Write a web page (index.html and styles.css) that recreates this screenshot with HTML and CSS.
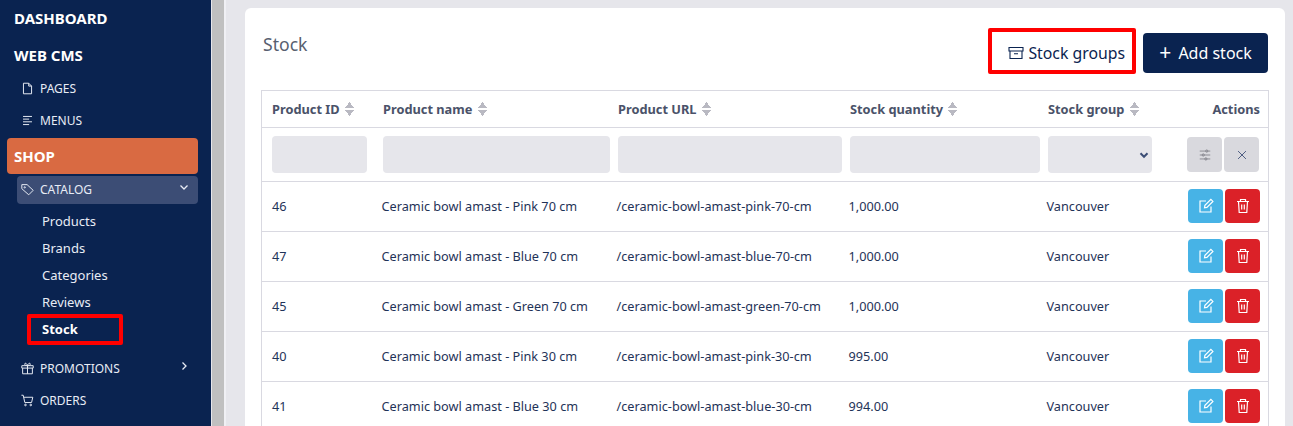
FILE: index.html
```html
<!DOCTYPE html>
<html>
<head>
  <meta charset="UTF-8" />
  <title>Stock</title>
  <link rel="stylesheet" href="styles.css">
</head>
<body>
  <aside class="sidebar">
    <a class="nav-title nav-dashboard">DASHBOARD</a>
    <a class="nav-title nav-cms">WEB CMS</a>
    <a class="nav-item">
      <svg class="nav-icon" viewBox="0 0 16 16"><path d="M3 1.500h6.500l3.500 3.500v9.500h-10z M9.500 1.500v3.500h3.500"/></svg>
      PAGES
    </a>
    <a class="nav-item">
      <svg class="nav-icon" viewBox="0 0 16 16"><path d="M2.500 3h11 M2.500 6.300h7.500 M2.500 9.600h11 M2.500 13h7.500"/></svg>
      MENUS
    </a>
    <a class="nav-shop">SHOP</a>
    <a class="nav-catalog">
      <svg class="nav-icon" viewBox="0 0 16 16"><path d="M1 2h6.500l7.500 7-5.500 5.500-8.500-7.500z"/><circle cx="4.600" cy="5.400" r=".8"/></svg>
      CATALOG
      <svg class="nav-chevron" viewBox="0 0 10 10"><path d="M1.500 3.500 5 7l3.500-3.500"/></svg>
    </a>
    <ul class="sub-menu">
      <li>Products</li>
      <li>Brands</li>
      <li>Categories</li>
      <li>Reviews</li>
      <li class="sub-active">Stock</li>
    </ul>
    <a class="nav-item nav-promotions">
      <svg class="nav-icon" viewBox="0 0 16 16"><path d="M1 4.500h14v3h-14z M2 7.500v7h12v-7 M8 4.500v10 M8 4.500C6 4.500 4.500 3.800 4.500 2.600 4.500 1 7 1 8 4.500 9 1 11.500 1 11.500 2.600 11.500 3.800 10 4.500 8 4.500z"/></svg>
      PROMOTIONS
      <svg class="nav-chevron" viewBox="0 0 10 10"><path d="M3.500 1.500 7 5 3.500 8.500"/></svg>
    </a>
    <a class="nav-item">
      <svg class="nav-icon" viewBox="0 0 16 16"><path d="M.5 1.500h2.200l2 9h8.300l1.500-6.500h-11"/><circle cx="5.500" cy="13.500" r="1"/><circle cx="12" cy="13.500" r="1"/></svg>
      ORDERS
    </a>
  </aside>
  <div class="scroll-bar"></div>
  <main class="main">
    <section class="card">
      <div class="card-head">
        <h1 class="card-title">Stock</h1>
        <div class="card-actions">
          <a class="btn-groups">
            <svg class="btn-icon" viewBox="0 0 16 16"><path d="M1 2.500h14v3.500h-14z M2 6v7.500h12v-7.500 M6 8.800h4"/></svg>
            Stock groups
          </a>
          <a class="btn-add"><span class="plus">+</span> Add stock</a>
        </div>
      </div>
      <table class="stock-table">
        <colgroup>
          <col class="col-id"><col class="col-name"><col class="col-url"><col class="col-qty"><col class="col-group"><col class="col-actions">
        </colgroup>
        <thead>
          <tr class="head-row">
            <th>Product ID <span class="sort"></span></th>
            <th>Product name <span class="sort"></span></th>
            <th>Product URL <span class="sort"></span></th>
            <th>Stock quantity <span class="sort"></span></th>
            <th>Stock group <span class="sort"></span></th>
            <th class="th-actions">Actions</th>
          </tr>
          <tr class="filter-row">
            <td><input class="filter-input"></td>
            <td><input class="filter-input"></td>
            <td><input class="filter-input"></td>
            <td><input class="filter-input"></td>
            <td>
              <div class="filter-input filter-select">
                <svg viewBox="0 0 10 10"><path d="M1.500 3.200 5 6.800l3.500-3.600"/></svg>
              </div>
            </td>
            <td>
              <div class="row-btns filter-btns">
                <a class="icon-btn btn-gray">
                  <svg viewBox="0 0 16 16"><path d="M2 3.500h12 M2 8h12 M2 12.500h12"/><circle cx="10" cy="3.500" r="1.300"/><circle cx="6" cy="8" r="1.300"/><circle cx="9" cy="12.500" r="1.300"/></svg>
                </a>
                <a class="icon-btn btn-gray btn-clear">
                  <svg viewBox="0 0 16 16"><path d="M3.500 3.500l9 9 M12.500 3.500l-9 9"/></svg>
                </a>
              </div>
            </td>
          </tr>
        </thead>
        <tbody id="stock-rows"></tbody>
      </table>
    </section>
  </main>
  <script>
    let rows = [
      [46, "Ceramic bowl amast - Pink 70 cm", "/ceramic-bowl-amast-pink-70-cm", "1,000.00"],
      [47, "Ceramic bowl amast - Blue 70 cm", "/ceramic-bowl-amast-blue-70-cm", "1,000.00"],
      [45, "Ceramic bowl amast - Green 70 cm", "/ceramic-bowl-amast-green-70-cm", "1,000.00"],
      [40, "Ceramic bowl amast - Pink 30 cm", "/ceramic-bowl-amast-pink-30-cm", "995.00"],
      [41, "Ceramic bowl amast - Blue 30 cm", "/ceramic-bowl-amast-blue-30-cm", "994.00"]
    ];
    let tbody = document.getElementById('stock-rows');
    rows.forEach(row => {
      let tr = document.createElement('tr');
      tr.innerHTML = `
        <td>${row[0]}</td>
        <td>${row[1]}</td>
        <td>${row[2]}</td>
        <td>${row[3]}</td>
        <td>Vancouver</td>
        <td>
          <div class="row-btns">
            <a class="icon-btn btn-edit">
              <svg viewBox="0 0 16 16"><path d="M13 8.500v5.500h-11v-11h6 M6.500 9.800l.4-2.400 6-6 2 2-6 6z"/></svg>
            </a>
            <a class="icon-btn btn-delete">
              <svg viewBox="0 0 16 16"><path d="M2 3.500h12 M5.500 3.500v-2h5v2 M3.500 3.500l.7 11h7.600l.7-11 M6.700 6.500v5 M9.300 6.500v5"/></svg>
            </a>
          </div>
        </td>`;
      tbody.appendChild(tr);
    });
  </script>
</body>
</html>
```

FILE: styles.css
```css
* {
  margin: 0;
  padding: 0;
  box-sizing: border-box;
}
html, body {
  height: 100%;
  overflow: hidden;
}
body {
  display: flex;
  font-family: "Noto Sans", Arial, sans-serif;
  background: #e6e6eb;
  color: #1f3358;
}
a {
  text-decoration: none;
}

/* sidebar */
.sidebar {
  width: 211px;
  flex-shrink: 0;
  background: #0a2350;
  color: #e8ecf5;
  padding-top: 8px;
}
.nav-title {
  display: block;
  height: 20px;
  line-height: 20px;
  margin-left: 14px;
  font-size: 15px;
  font-weight: 700;
  color: #fff;
}
.nav-cms {
  margin-top: 17px;
  margin-bottom: 7px;
}
.nav-item {
  display: flex;
  align-items: center;
  height: 32px;
  padding-left: 21px;
  font-size: 12px;
  position: relative;
}
.nav-icon {
  width: 13px;
  height: 13px;
  margin-right: 6px;
  fill: none;
  stroke: #e8ecf5;
  stroke-width: 1.200;
}
.nav-shop {
  display: block;
  height: 36px;
  line-height: 37px;
  margin: 2px 13px 2px 7px;
  padding-left: 7px;
  background: #d96a42;
  border-radius: 4px;
  font-size: 15px;
  font-weight: 700;
  color: #fff;
}
.nav-catalog {
  display: flex;
  align-items: center;
  height: 28px;
  margin: 0 13px 0 17px;
  padding: 0 0 2px 4px;
  background: #3c4d75;
  border-radius: 4px;
  font-size: 12px;
}
.nav-chevron {
  width: 10px;
  height: 10px;
  margin-left: auto;
  margin-right: 9px;
  margin-top: -4px;
  fill: none;
  stroke: #e8ecf5;
  stroke-width: 1.300;
}
.nav-promotions .nav-chevron {
  margin-right: 22px;
}
.sub-menu {
  list-style: none;
  margin-top: 4px;
  margin-bottom: 9px;
  padding-left: 42px;
  font-size: 13px;
}
.sub-menu li {
  height: 27px;
  line-height: 27px;
}
.sub-active {
  position: relative;
  font-weight: 700;
  color: #fff;
}
.sub-active::after {
  content: "";
  box-sizing: border-box;
  position: absolute;
  left: -15px;
  top: -2px;
  width: 96px;
  height: 31px;
  border: 4px solid #ff0000;
  border-radius: 2px;
}

/* window scrollbar strip beside the sidebar */
.scroll-bar {
  width: 14px;
  flex-shrink: 0;
  margin-left: 1px;
  background: #c0c0c0;
  border-right: 2px solid #f0f0f4;
}

/* main content */
.main {
  flex: 1;
  padding: 8px 8px 0 19px;
  min-width: 0;
}
.card {
  background: #fff;
  border-radius: 6px;
  padding: 0 16px;
  height: 600px;
}
.card-head {
  display: flex;
  justify-content: space-between;
  height: 82px;
}
.card-title {
  margin: 24px 0 0 2px;
  font-size: 17.600px;
  font-weight: 400;
  line-height: 24px;
  color: #585f70;
}
.card-actions {
  display: flex;
  align-items: flex-start;
  gap: 7px;
  margin-right: 1px;
}
.btn-groups {
  display: flex;
  align-items: center;
  justify-content: flex-end;
  width: 148px;
  height: 46px;
  margin-top: 20px;
  padding: 4px 7px 0 0;
  border: 4px solid #ff0000;
  border-radius: 2px;
  font-size: 15.800px;
  color: #0a2350;
}
.btn-icon {
  width: 16px;
  height: 16px;
  margin-right: 4px;
  fill: none;
  stroke: #0a2350;
  stroke-width: 1.100;
}
.btn-add {
  display: block;
  width: 125px;
  height: 40px;
  margin-top: 25px;
  line-height: 40px;
  text-align: center;
  background: #0a2350;
  border-radius: 4px;
  font-size: 16px;
  color: #fff;
}
.plus {
  font-size: 21px;
  line-height: 20px;
  vertical-align: -1px;
  margin-right: 3px;
}

/* table */
.stock-table {
  width: 1007px;
  table-layout: fixed;
  border-collapse: collapse;
  font-size: 12.700px;
}
.col-id { width: 113px; }
.col-name { width: 235px; }
.col-url { width: 232px; }
.col-qty { width: 198px; }
.col-group { width: 112px; }
.col-actions { width: 117px; }
.stock-table th,
.stock-table td {
  border-top: 1px solid #d9d9e1;
  white-space: nowrap;
  padding-left: 7px;
}
.stock-table tr > :first-child {
  border-left: 1px solid #d9d9e1;
  padding-left: 10px;
}
.stock-table tr > :last-child {
  border-right: 1px solid #d9d9e1;
  padding: 0 8px 0 0;
}
.head-row th {
  height: 37px;
  padding-left: 8.500px;
  text-align: left;
  font-size: 12.800px;
  font-weight: 700;
  color: #4a5269;
}
.head-row .th-actions {
  text-align: right;
}
.sort {
  display: inline-block;
  width: 9px;
  height: 14px;
  margin-left: 2px;
  vertical-align: -2px;
  background:
    conic-gradient(from 143deg at 50% 0, #b9b9c2 74deg, transparent 0) top / 100% 6px no-repeat,
    conic-gradient(from -37deg at 50% 100%, #b9b9c2 74deg, transparent 0) bottom / 100% 6px no-repeat;
}
.filter-row td {
  height: 54px;
  padding-left: 8px;
}
.stock-table tbody td {
  height: 50px;
  padding-bottom: 2px;
}
.filter-input {
  display: block;
  width: 100%;
  height: 37px;
  border: 0;
  border-radius: 4px;
  background: #e6e6eb;
}
.filter-row td:first-child .filter-input {
  width: 95px;
}
.filter-select {
  position: relative;
}
.filter-select svg {
  position: absolute;
  right: 3px;
  top: 14px;
  width: 10px;
  height: 10px;
  fill: none;
  stroke: #3c4d75;
  stroke-width: 2;
}
.row-btns {
  display: flex;
  justify-content: flex-end;
  gap: 2px;
}
.stock-table tbody .row-btns {
  margin-top: -1px;
}
.icon-btn {
  display: flex;
  align-items: center;
  justify-content: center;
  width: 35px;
  height: 34px;
  border-radius: 4px;
}
.icon-btn svg {
  width: 16px;
  height: 16px;
  fill: none;
  stroke: #fff;
  stroke-width: 1.200;
}
.btn-edit { background: #47b3e6; }
.btn-delete { background: #db2128; }
.btn-gray {
  height: 35px;
  background: #d9d9de;
}
.btn-gray svg {
  width: 14px;
  height: 14px;
  stroke: #84848c;
  stroke-width: 1;
}
.btn-clear svg { stroke: #3c4d75; }
.filter-btns {
  margin-right: 1px;
}
```
